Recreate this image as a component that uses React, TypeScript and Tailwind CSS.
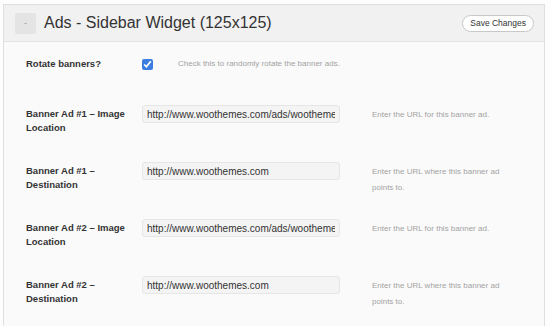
const labelClassName =
  "w-[116px] shrink-0 text-[9.5px] font-bold leading-[14px] text-[#333]";

const inputClassName =
  "mt-[2px] h-[18px] w-[198px] shrink-0 rounded-[3px] border border-[#e6e6e6] bg-[#f4f4f4] px-[4px] text-[10px] text-[#333] outline-none";

const descClassName = "text-[8px] leading-[16px] text-[#a3a3a3]";

type Field = {
  label: [string, string];
  value: string;
  desc: [string, string?];
};

const fields: Field[] = [
  {
    label: ["Banner Ad #1 – Image", "Location"],
    value: "http://www.woothemes.com/ads/woothemes-125x125-1.gif",
    desc: ["Enter the URL for this banner ad."],
  },
  {
    label: ["Banner Ad #1 –", "Destination"],
    value: "http://www.woothemes.com",
    desc: ["Enter the URL where this banner ad", "points to."],
  },
  {
    label: ["Banner Ad #2 – Image", "Location"],
    value: "http://www.woothemes.com/ads/woothemes-125x125-2.gif",
    desc: ["Enter the URL for this banner ad."],
  },
  {
    label: ["Banner Ad #2 –", "Destination"],
    value: "http://www.woothemes.com",
    desc: ["Enter the URL where this banner ad", "points to."],
  },
];

export default function App() {
  return (
    <div
      className="h-[326px] w-[550px] overflow-hidden bg-[#fdfdfd] pt-[4px] pl-[3px]"
      style={{ fontFamily: '"Liberation Sans", Arial, sans-serif' }}
    >
      <div className="h-[330px] w-[542px] border-l border-r border-t border-[#dfdfdf] bg-[#fafafa]">
        <div className="flex h-[37px] items-center border-b border-[#e3e3e3] bg-[#f1f1f1] pl-[11px] pr-[10px]">
          <button className="flex h-[21px] w-[21px] items-center justify-center rounded-[2px] bg-[#e4e4e4] text-[9px] leading-none text-[#999]">
            -
          </button>
          <h2 className="ml-[8px] text-[16px] leading-none text-[#333]">
            Ads - Sidebar Widget (125x125)
          </h2>
          <button className="ml-auto h-[17px] rounded-full border border-[#c8c8c8] bg-white px-[7px] text-[8.5px] leading-none text-[#333]">
            Save Changes
          </button>
        </div>

        <div className="pl-[22px]">
          <div className="flex h-[41px] items-center pt-[3px]">
            <div className={labelClassName}>Rotate banners?</div>
            <div className="flex w-[36px] shrink-0 items-center">
              <input
                type="checkbox"
                defaultChecked
                className="h-[11px] w-[11px] accent-[#3b7de0]"
              />
            </div>
            <div className={descClassName}>Check this to randomly rotate the banner ads.</div>
          </div>

          {fields.map((f, i) => (
            <div key={i} className="mt-[20px] flex h-[37px] items-start">
              <div className={labelClassName + " pt-[4px]"}>
                <div>{f.label[0]}</div>
                <div>{f.label[1]}</div>
              </div>
              <input
                type="text"
                readOnly
                value={f.value}
                className={inputClassName}
              />
              <div className={descClassName + " ml-[32px] pt-[4px]"}>
                <div>{f.desc[0]}</div>
                {f.desc[1] ? <div>{f.desc[1]}</div> : null}
              </div>
            </div>
          ))}
        </div>
      </div>
    </div>
  );
}
